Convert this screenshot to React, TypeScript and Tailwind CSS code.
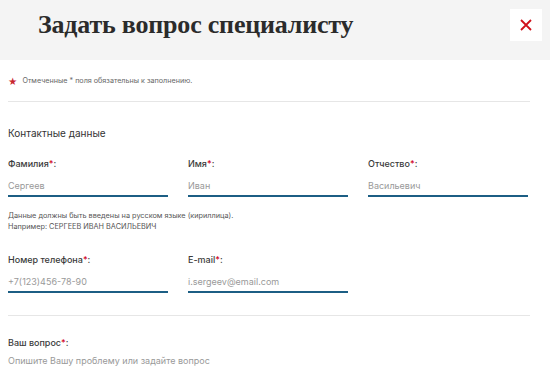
import React from "react";

function Field({ label, placeholder }: { label: string; placeholder: string }) {
  return (
    <div className="flex flex-col w-[160px]">
      <div className="text-[9px] font-medium text-[#3a3a3a] leading-[12px]">
        {label}
        <span className="text-[#d0021b]">*</span>:
      </div>
      <div className="mt-[10px] text-[9px] text-[#999] leading-[12px] h-[14px]">{placeholder}</div>
      <div className="h-[2px] bg-[#1c5e84] mt-[1px]" />
    </div>
  );
}

export default function App() {
  return (
    <div className="w-[550px] h-[368px] bg-white overflow-hidden" style={{ fontFamily: "Inter, Roboto, 'Liberation Sans', sans-serif" }}>
      <div className="h-[60px] bg-[#f4f4f4] flex items-center justify-between pl-[38px] pr-[8px]">
        <div className="text-[26px] font-bold text-[#2b2b2b] leading-none -mt-[10px] tracking-[-0.2px]" style={{ fontFamily: "'Liberation Serif', serif" }}>
          Задать вопрос специалисту
        </div>
        <div className="w-[32px] h-[32px] bg-white flex items-center justify-center -mt-[10px]">
          <svg width="12" height="12" viewBox="0 0 12 12">
            <path d="M1 1 L11 11 M11 1 L1 11" stroke="#d0111b" strokeWidth="1.8" />
          </svg>
        </div>
      </div>
      <div className="pl-[8px] pr-[20px]">
        <div className="flex items-center gap-[5px] mt-[16px] h-[10px]">
          <span className="text-[#c8262f] text-[9px] leading-none">★</span>
          <span className="text-[7.2px] text-[#666]">Отмеченные * поля обязательны к заполнению.</span>
        </div>
        <div className="h-px bg-[#e6e6e6] mt-[15px]" />
        <div className="mt-[25px] text-[10px] text-[#333] leading-[12px]">Контактные данные</div>
        <div className="flex gap-[20px] mt-[19px]">
          <Field label="Фамилия" placeholder="Сергеев" />
          <Field label="Имя" placeholder="Иван" />
          <Field label="Отчество" placeholder="Васильевич" />
        </div>
        <div className="mt-[13px] text-[7.3px] text-[#555] leading-[11px]">
          Данные должны быть введены на русском языке (кириллица).
          <br />
          Например: СЕРГЕЕВ ИВАН ВАСИЛЬЕВИЧ
        </div>
        <div className="flex gap-[20px] mt-[22px]">
          <Field label="Номер телефона" placeholder="+7(123)456-78-90" />
          <Field label="E-mail" placeholder="i.sergeev@email.com" />
        </div>
        <div className="h-px bg-[#e6e6e6] mt-[22px]" />
        <div className="mt-[21px] text-[9px] font-medium text-[#3a3a3a] leading-[12px]">
          Ваш вопрос<span className="text-[#d0021b]">*</span>:
        </div>
        <div className="mt-[6px] text-[9px] text-[#999] leading-[12px]">Опишите Вашу проблему или задайте вопрос</div>
      </div>
    </div>
  );
}
